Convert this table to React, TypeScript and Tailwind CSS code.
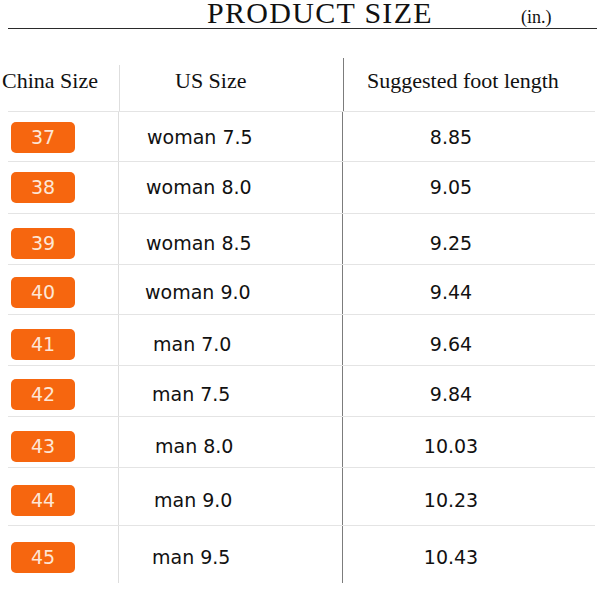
interface SizeRow {
  cn: string;
  us: string;
  foot: string;
  h: string;
  pt: string;
  usPad: string;
}

const rows: SizeRow[] = [
  { cn: '37', us: 'woman 7.5', foot: '8.85', h: 'h-[50px]', pt: 'pt-[1px]', usPad: 'pl-[28px]' },
  { cn: '38', us: 'woman 8.0', foot: '9.05', h: 'h-[52px]', pt: 'pt-0', usPad: 'pl-[27px]' },
  { cn: '39', us: 'woman 8.5', foot: '9.25', h: 'h-[51px]', pt: 'pt-[8px]', usPad: 'pl-[27px]' },
  { cn: '40', us: 'woman 9.0', foot: '9.44', h: 'h-[50px]', pt: 'pt-[5px]', usPad: 'pl-[26px]' },
  { cn: '41', us: 'man 7.0', foot: '9.64', h: 'h-[51px]', pt: 'pt-[9px]', usPad: 'pl-[34px]' },
  { cn: '42', us: 'man 7.5', foot: '9.84', h: 'h-[51px]', pt: 'pt-[7px]', usPad: 'pl-[33px]' },
  { cn: '43', us: 'man 8.0', foot: '10.03', h: 'h-[51px]', pt: 'pt-[8px]', usPad: 'pl-[36px]' },
  { cn: '44', us: 'man 9.0', foot: '10.23', h: 'h-[58px]', pt: 'pt-[8px]', usPad: 'pl-[35px]' },
  { cn: '45', us: 'man 9.5', foot: '10.43', h: 'h-[57px]', pt: 'pt-[6px]', usPad: 'pl-[33px]' },
];

const serif = "font-['Liberation_Serif','Times_New_Roman',serif]";
const sans = "font-['DejaVu_Sans',Verdana,sans-serif]";

const App = () => {
  return (
    <div className="w-[600px] h-[601px] bg-white overflow-hidden text-[#111]">
      {/* title */}
      <div className={`ml-[8px] mr-[3px] h-[29px] border-b border-[#2a2a2a] flex items-end ${serif}`}>
        <span className="ml-[199px] mb-[2px] text-[30px] leading-[26px] tracking-[1.3px] whitespace-nowrap">
          PRODUCT SIZE
        </span>
        <span className="ml-[88px] mb-[2px] text-[18px] leading-none">(in.)</span>
      </div>

      {/* table */}
      <div className="mt-[29px]">
        <div className={`ml-[8px] mr-[5px] h-[54px] border-b border-[#e4e4e4] flex ${serif} text-[22px] leading-[25px]`}>
          <div className="-ml-[8px] w-[119px] shrink-0 flex flex-col">
            <div className="pt-[10px] pl-[2px] whitespace-nowrap">China Size</div>
          </div>
          <div className="w-[224px] shrink-0 flex">
            <div className="w-px mt-[7px] bg-[#dedede]" />
            <div className="pt-[10px] pl-[55px] whitespace-nowrap">US Size</div>
          </div>
          <div className="w-px bg-[#7c7c7c]" />
          <div className="pt-[10px] pl-[23px] whitespace-nowrap">Suggested foot length</div>
        </div>

        {rows.map((row, i) => (
          <div
            key={row.cn}
            className={`ml-[8px] mr-[5px] ${row.h} flex ${i < rows.length - 1 ? 'border-b border-[#e4e4e4]' : ''}`}
          >
            <div className={`-ml-[8px] w-[119px] shrink-0 flex items-center ${row.pt} border-r border-[#dedede]`}>
              <div
                className={`ml-[11px] w-[64px] h-[31px] rounded-[5px] bg-[#f6660f] text-[#fde6d6] flex items-center justify-center ${sans} text-[19px] leading-none`}
              >
                {row.cn}
              </div>
            </div>
            <div className={`w-[224px] shrink-0 flex items-center ${row.pt} ${row.usPad} ${sans} text-[19px] leading-none whitespace-nowrap border-r border-[#7c7c7c]`}>
              {row.us}
            </div>
            <div className={`w-[216px] shrink-0 flex items-center justify-center ${row.pt} ${sans} text-[19px] leading-none`}>
              {row.foot}
            </div>
          </div>
        ))}
      </div>
    </div>
  );
};

export default App;
